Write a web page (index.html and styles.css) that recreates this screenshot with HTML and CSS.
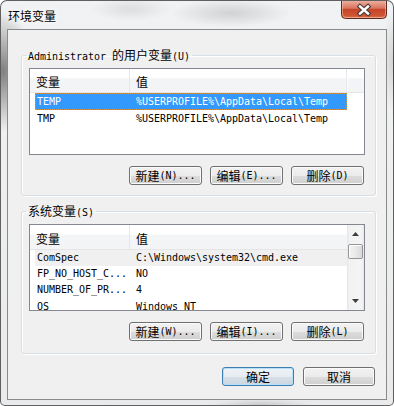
FILE: index.html
```html
<!DOCTYPE html>
<html>
<head>
<meta charset="utf-8">
<link rel="stylesheet" href="styles.css">
</head>
<body>
<div class="window">
  <div class="titlebar">
    <span class="title">环境变量</span>
    <div class="close">
      <svg width="46" height="19" viewBox="0 0 46 19">
        <defs>
          <linearGradient id="cg" x1="0" y1="0" x2="0" y2="1">
            <stop offset="0" stop-color="#eeb5a6"/>
            <stop offset="0.45" stop-color="#d9735c"/>
            <stop offset="0.5" stop-color="#c4442a"/>
            <stop offset="0.85" stop-color="#cf5533"/>
            <stop offset="1" stop-color="#e0805a"/>
          </linearGradient>
        </defs>
        <path d="M0.5 0 V14.5 Q0.5 18.5 4.5 18.5 H41.5 Q45.5 18.5 45.5 14.5 V0" fill="url(#cg)" stroke="#5a2a20" stroke-width="1"/>
        <path d="M1.5 0 V14 Q1.5 17.5 5 17.5 H41 Q44.5 17.5 44.5 14 V0" fill="none" stroke="rgba(255,210,190,0.5)" stroke-width="1"/>
        <path d="M19 6.5 L27 13.5 M27 6.5 L19 13.5" stroke="#4a3a36" stroke-width="4.6" stroke-linecap="square"/>
        <path d="M19 6.5 L27 13.5 M27 6.5 L19 13.5" stroke="#ffffff" stroke-width="2.4" stroke-linecap="square"/>
      </svg>
    </div>
  </div>
  <div class="client">
    <fieldset class="group g1">
      <legend><span class="m">Administrator </span>的用户变量<span class="m">(U)</span></legend>
      <div class="list">
        <div class="hdr">
          <div class="hc c1">变量</div>
          <div class="hc c2">值</div>
          <div class="hc rest"></div>
        </div>
        <div class="rows r17">
          <div class="row sel"><span class="cell c1 m">TEMP</span><span class="cell c2 m">%USERPROFILE%\AppData\Local\Temp</span></div>
          <div class="row"><span class="cell c1 m">TMP</span><span class="cell c2 m">%USERPROFILE%\AppData\Local\Temp</span></div>
        </div>
      </div>
      <div class="btns">
        <div class="btn">新建<span class="m">(N)...</span></div>
        <div class="btn">编辑<span class="m">(E)...</span></div>
        <div class="btn">删除<span class="m">(D)</span></div>
      </div>
    </fieldset>

    <fieldset class="group g2">
      <legend>系统变量<span class="m">(S)</span></legend>
      <div class="list l2">
        <div class="main">
          <div class="hdr h25">
            <div class="hc c1">变量</div>
            <div class="hc c2 last">值</div>
          </div>
          <div class="rows r16">
            <div class="row inact"><span class="cell c1 m">ComSpec</span><span class="cell c2 m">C:\Windows\system32\cmd.exe</span></div>
            <div class="row"><span class="cell c1 m">FP_NO_HOST_C...</span><span class="cell c2 m">NO</span></div>
            <div class="row"><span class="cell c1 m">NUMBER_OF_PR...</span><span class="cell c2 m">4</span></div>
            <div class="row"><span class="cell c1 m">OS</span><span class="cell c2 m">Windows_NT</span></div>
          </div>
        </div>
        <div class="vscroll">
          <div class="arrow"><svg width="17" height="17" viewBox="0 0 17 17"><path d="M5 11 L8.5 7 L12 11 Z" fill="#3c3c3c"/></svg></div>
          <div class="thumb"></div>
          <div class="track"></div>
          <div class="arrow"><svg width="17" height="17" viewBox="0 0 17 17"><path d="M5 6 L8.5 10 L12 6 Z" fill="#3c3c3c"/></svg></div>
        </div>
      </div>
      <div class="btns b2">
        <div class="btn">新建<span class="m">(W)...</span></div>
        <div class="btn">编辑<span class="m">(I)...</span></div>
        <div class="btn">删除<span class="m">(L)</span></div>
      </div>
    </fieldset>

    <div class="okrow">
      <div class="btn ok default">确定</div>
      <div class="btn ok">取消</div>
    </div>
  </div>
</div>
</body>
</html>
```

FILE: styles.css
```css
* { box-sizing: border-box; }
html, body { margin: 0; padding: 0; }
body {
  width: 394px;
  height: 406px;
  overflow: hidden;
  background: #ffffff;
  font-family: "Noto Sans CJK SC", "Noto Sans", sans-serif;
  font-size: 12px;
  color: #000;
}
.m {
  font-family: "DejaVu Sans Mono", "Liberation Mono", monospace;
  font-size: 10px;
  letter-spacing: -0.02px;
}
.window {
  width: 394px;
  height: 406px;
  border: 1px solid rgba(50, 50, 50, 0.75);
  border-radius: 7px 7px 5px 5px;
  overflow: hidden;
  display: flex;
  flex-direction: column;
  background:
    radial-gradient(ellipse 30px 60px at 2px 70px, rgba(90,90,90,0.75), rgba(90,90,90,0) 100%),
    radial-gradient(ellipse 60px 14px at 230px 12px, rgba(150,150,150,0.35), rgba(150,150,150,0) 100%),
    radial-gradient(ellipse 40px 12px at 130px 8px, rgba(160,160,160,0.25), rgba(160,160,160,0) 100%),
    radial-gradient(ellipse 50px 6px at 260px 404px, rgba(140,140,140,0.35), rgba(140,140,140,0) 100%),
    radial-gradient(ellipse 12px 50px at 392px 60px, rgba(140,140,140,0.3), rgba(140,140,140,0) 100%),
    linear-gradient(#f1f2f3, #e9eaec);
}
.titlebar {
  height: 28px;
  flex-shrink: 0;
  display: flex;
  align-items: flex-start;
}
.title {
  margin: 8px 0 0 7px;
  height: 13px;
  line-height: 13px;
  font-size: 12px;
  text-shadow: 0 0 4px #fff, 0 0 8px #fff;
}
.close {
  margin-left: auto;
  margin-right: 6px;
  width: 46px;
  height: 19px;
  margin-top: -1px;
}
.close svg { display: block; }

.client {
  margin: 0 6px;
  height: 371px;
  flex-shrink: 0;
  border: 1px solid #8a8a8a;
  background: #f0f0f0;
}

fieldset.group {
  min-width: 0;
  margin: 19px 10px 0 13px;
  padding: 7px 10px 10px 7px;
  border: 1px solid #d5dfe5;
  border-radius: 3px;
  box-shadow: inset 1px 1px 0 #ffffff, 1px 1px 0 #ffffff;
}
fieldset.g2 {
  margin-top: 9px;
  padding-bottom: 12px;
}
legend {
  height: 12px;
  line-height: 12px;
  padding: 0 2px;
  margin-left: -3px;
  white-space: nowrap;
}

.list {
  width: 336px;
  height: 87px;
  border: 1px solid #828790;
  background: #ffffff;
  overflow: hidden;
}
.hdr {
  height: 24px;
  display: flex;
  border-bottom: 1px solid #e5e5e5;
  background: linear-gradient(#ffffff 0%, #ffffff 38%, #f4f5f6 42%, #f3f4f6 100%);
}
.hdr.h25 { height: 25px; }
.hc {
  height: 100%;
  display: flex;
  align-items: center;
  padding: 2px 0 0 6px;
  white-space: nowrap;
}
.hc.c1 { width: 100px; border-right: 1px solid #e3e6ea; }
.hc.c2 { width: 217px; border-right: 1px solid #e3e6ea; }
.hc.c2.last { border-right: none; flex: 1; }
.hc.rest { flex: 1; box-shadow: inset 1px 0 0 #ffffff; }

.rows { padding-left: 5px; }
.row {
  display: flex;
  width: 312px;
  height: 17px;
  line-height: 17px;
  white-space: nowrap;
}
.r16 .row { height: 16px; line-height: 16px; }
.r16 .row:last-child { padding-top: 1px; }
.cell { overflow: hidden; white-space: nowrap; }
.cell.c1 { width: 95px; padding-left: 2px; }
.cell.c2 { width: 217px; padding-left: 6px; }
.row.sel {
  background: #3399ff;
  color: #ffffff;
  outline: 1px dotted #d9974a;
  outline-offset: -1px;
}
.row.inact { background: #f0f0f0; }

.l2 { display: flex; }
.l2 .main { flex: 1; min-width: 0; overflow: hidden; }
.vscroll {
  width: 17px;
  flex-shrink: 0;
  display: flex;
  flex-direction: column;
  background: linear-gradient(to right, #e6e6e6 0%, #f2f2f2 15%, #f4f4f4 85%, #e8e8e8 100%);
}
.arrow { height: 17px; flex-shrink: 0; }
.arrow svg { display: block; }
.thumb {
  margin: 2px 1px 0 1px;
  height: 15px;
  flex-shrink: 0;
  border: 1px solid #969696;
  border-radius: 2px;
  background: linear-gradient(to right, #f3f3f3 0%, #e9e9e9 50%, #d9d9d9 100%);
  box-shadow: inset 1px 1px 0 #ffffff;
}
.track { flex: 1; }

.btns {
  display: flex;
  justify-content: flex-end;
  gap: 8px;
  margin-top: 11px;
  padding-right: 1px;
}
.btn {
  width: 73px;
  height: 19px;
  display: flex;
  align-items: center;
  justify-content: center;
  white-space: nowrap;
  border: 1px solid #707070;
  border-radius: 3px;
  background: linear-gradient(#f2f2f2 0%, #ebebeb 50%, #dddddd 51%, #cfcfcf 100%);
  box-shadow: inset 0 0 0 1px #fbfbfb;
  line-height: 17px;
}
.okrow {
  display: flex;
  justify-content: flex-end;
  gap: 9px;
  margin: 13px 11px 0 0;
}
.btn.ok { width: 72px; }
.btn.default {
  border-color: #3c7fb1;
  box-shadow: inset 0 0 0 1px #b6def6;
  background: linear-gradient(#eef3f7 0%, #e6ecf1 50%, #d7e0e8 51%, #cad6e0 100%);
}
```
